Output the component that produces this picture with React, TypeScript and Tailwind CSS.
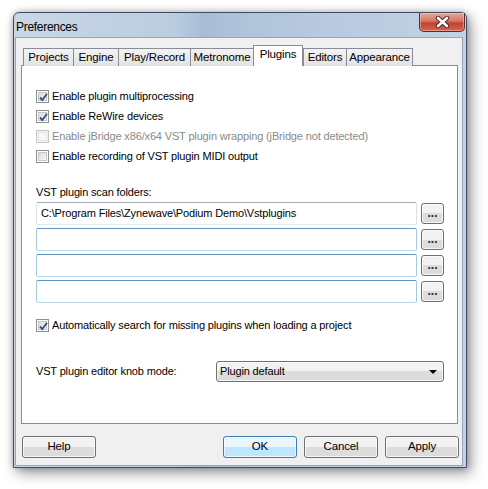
const font = { fontFamily: '"Liberation Sans", Arial, sans-serif' };

function CheckBox({ checked, disabled }: { checked?: boolean; disabled?: boolean }) {
  return (
    <div
      className={`flex h-[13px] w-[13px] shrink-0 items-center justify-center border ${
        disabled ? "border-[#c6c6c6] bg-[#f4f4f4]" : "border-[#8e8f8f] bg-white"
      }`}
    >
      <div
        className={`relative h-[9px] w-[9px] border ${
          disabled
            ? "border-[#e4e4e4] bg-[#f7f7f7]"
            : "border-[#c6c6c6] bg-gradient-to-br from-[#dcdcdc] to-[#f9f9f9]"
        }`}
      >
        {checked && (
          <svg className="absolute -left-[1px] -top-[1px]" width="11" height="11" viewBox="0 0 11 11">
            <path d="M2 5.5 L4.3 8 L9 1.8" fill="none" stroke="#3a4f86" strokeWidth="1.9" />
          </svg>
        )}
      </div>
    </div>
  );
}

function CheckRow({ label, checked, disabled }: { label: string; checked?: boolean; disabled?: boolean }) {
  return (
    <div className="flex h-[20px] items-center gap-[3px]">
      <CheckBox checked={checked} disabled={disabled} />
      <span className={disabled ? "text-[#8a8a8a]" : "text-black"}>{label}</span>
    </div>
  );
}

function Tab({ label, width, active }: { label: string; width: string; active?: boolean }) {
  return (
    <div
      className={`flex items-center justify-center border border-b-0 border-[#898c95] ${width} ${
        active
          ? "h-[21px] bg-white pb-[2px]"
          : "h-[18px] border-r-0 bg-gradient-to-b from-[#f3f3f3] to-[#e2e2e2]"
      }`}
    >
      {label}
    </div>
  );
}

function Button({ label, primary, className = "" }: { label: string; primary?: boolean; className?: string }) {
  return (
    <div
      className={`flex items-center justify-center rounded-[3px] border ${
        primary
          ? "border-[#3c7fb1] bg-gradient-to-b from-[#eaf6fd] from-50% to-[#bee6fd] to-50%"
          : "border-[#707070] bg-gradient-to-b from-[#f2f2f2] from-50% to-[#dcdcdc] to-50%"
      } shadow-[inset_0_0_0_1px_rgba(255,255,255,0.7)] ${className}`}
    >
      {label}
    </div>
  );
}

function FolderRow({ value, blue }: { value?: string; blue?: boolean }) {
  return (
    <div className="flex h-[23px] items-center gap-[4px]">
      <div
        className={`flex h-[23px] w-[381px] items-center rounded-[2px] border bg-white pl-[4px] ${
          blue
            ? "border-[#b7d9ed] border-t-[#5f94c2] border-l-[#a4c9e3] border-r-[#a4c9e3]"
            : "border-[#e3e9ef] border-t-[#abadb3] border-l-[#e2e3ea] border-r-[#dbdfe6]"
        }`}
      >
        {value}
      </div>
      <Button label="..." className="h-[21px] w-[23px] pb-[2px] text-[12px] font-bold tracking-[0px] text-[#1a2a44]" />
    </div>
  );
}

export default function App() {
  return (
    <div
      className="h-[489px] w-[488px] overflow-hidden bg-white pl-[13px] pt-[12px] text-[11px] tracking-[-0.15px]"
      style={font}
    >
      <div className="flex h-[456px] w-[454px] flex-col rounded-t-[6px] border border-[#3f4d60] bg-[linear-gradient(90deg,#c9d6e5_0%,#bccde0_35%,#a7bcd5_42%,#b2c4da_52%,#b9cadf_70%,#c3d2e4_100%)] shadow-[4px_5px_14px_rgba(0,0,0,0.4),0_0_6px_rgba(0,0,0,0.25)]">
        <div className="flex h-[24px] items-start justify-between">
          <span className="pl-[2px] pt-[5px] text-[12px] tracking-[-0.3px] text-black">Preferences</span>
          <div className="mr-[1px] flex h-[19px] w-[46px] items-center justify-center rounded-b-[5px] border border-t-0 border-[#5e2a22] bg-[linear-gradient(180deg,#e9a99b_0%,#d47565_45%,#c2432f_55%,#d0654f_100%)] shadow-[inset_0_0_0_1px_rgba(255,200,190,0.5)]">
            <svg width="15" height="12" viewBox="0 0 15 12">
              <path d="M3 2 L12 10 M12 2 L3 10" stroke="#4a2520" strokeWidth="4.4" strokeLinecap="round" />
              <path d="M3 2 L12 10 M12 2 L3 10" stroke="#ffffff" strokeWidth="2.6" strokeLinecap="round" />
            </svg>
          </div>
        </div>

        <div className="mb-[1px] ml-[1px] mr-[3px] flex-1 border border-[#93a6bc] bg-[#f0f0f0] px-[5px] pt-[7px]">
          <div className="relative z-10 -mb-[1px] flex h-[21px] items-end pl-[2px] text-[11.5px]">
            <Tab label="Projects" width="w-[50px]" />
            <Tab label="Engine" width="w-[45px]" />
            <Tab label="Play/Record" width="w-[72px]" />
            <Tab label="Metronome" width="w-[63px]" />
            <Tab label="Plugins" width="w-[50px]" active />
            <Tab label="Editors" width="w-[43px]" />
            <div className="flex h-[18px] w-[67px] items-center justify-center border border-b-0 border-[#898c95] bg-gradient-to-b from-[#f3f3f3] to-[#e2e2e2]">
              Appearance
            </div>
          </div>

          <div className="h-[359px] w-[437px] border border-[#898c95] bg-white pl-[14px] pt-[20px]">
            <CheckRow label="Enable plugin multiprocessing" checked />
            <CheckRow label="Enable ReWire devices" checked />
            <CheckRow label="Enable jBridge x86/x64 VST plugin wrapping (jBridge not detected)" disabled />
            <CheckRow label="Enable recording of VST plugin MIDI output" />

            <div className="mt-[18px] flex h-[16px] items-center">VST plugin scan folders:</div>

            <div className="mt-[2px] flex flex-col gap-[3px]">
              <FolderRow value="C:\Program Files\Zynewave\Podium Demo\Vstplugins" />
              <FolderRow blue />
              <FolderRow blue />
              <FolderRow blue />
            </div>

            <div className="mt-[12px]">
              <CheckRow label="Automatically search for missing plugins when loading a project" checked />
            </div>

            <div className="mt-[26px] flex items-center">
              <span className="w-[180px]">VST plugin editor knob mode:</span>
              <div className="flex h-[21px] w-[228px] items-center justify-between rounded-[3px] border border-[#707070] bg-gradient-to-b from-[#f2f2f2] from-50% to-[#dcdcdc] to-50% pl-[3px] pr-[6px] shadow-[inset_0_0_0_1px_rgba(255,255,255,0.7)]">
                <span>Plugin default</span>
                <svg width="8" height="4" viewBox="0 0 8 4">
                  <path d="M0 0 L8 0 L4 4 Z" fill="#000" />
                </svg>
              </div>
            </div>
          </div>

          <div className="ml-[1px] mt-[12px] flex w-[437px] items-center text-[11.5px]">
            <Button label="Help" className="h-[22px] w-[74px]" />
            <div className="flex-1" />
            <div className="flex gap-[7px]">
              <Button label="OK" primary className="h-[22px] w-[74px]" />
              <Button label="Cancel" className="h-[22px] w-[74px]" />
              <Button label="Apply" className="h-[22px] w-[74px]" />
            </div>
          </div>
        </div>
      </div>
    </div>
  );
}
